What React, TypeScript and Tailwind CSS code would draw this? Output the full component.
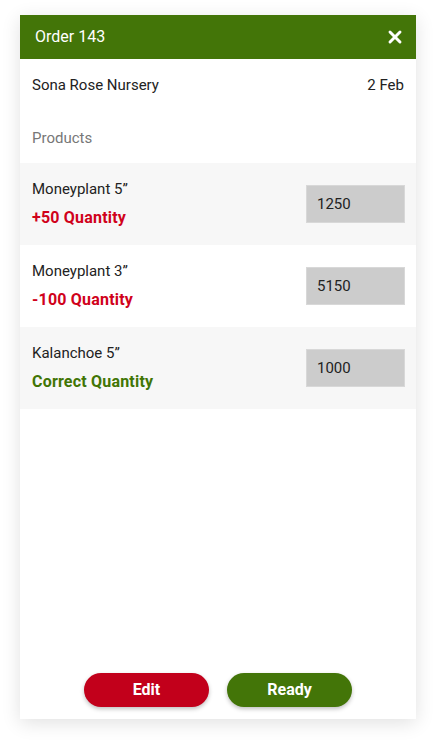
import { X } from "lucide-react";

const items = [
  { name: "Moneyplant 5”", note: "+50 Quantity", tone: "text-[#d0021b]", qty: "1250", bg: "bg-[#f7f7f7]" },
  { name: "Moneyplant 3”", note: "-100 Quantity", tone: "text-[#d0021b]", qty: "5150", bg: "bg-white" },
  { name: "Kalanchoe 5”", note: "Correct Quantity", tone: "text-[#417505]", qty: "1000", bg: "bg-[#f7f7f7]" },
];

export default function App() {
  return (
    <div className="min-h-screen bg-white pt-[15px] px-5 font-['Roboto',sans-serif]">
      <div className="w-[396px] h-[704px] bg-white shadow-[0_4px_18px_rgba(0,0,0,0.12)] flex flex-col">
        {/* Header */}
        <div className="h-11 bg-[#437508] flex items-center justify-between pl-[15px] pr-[11px]">
          <span className="text-white text-[16px]">Order 143</span>
          <X className="w-5 h-5 text-white" strokeWidth={3.5} />
        </div>

        <div className="flex items-center justify-between px-3 pt-[15px] text-[15px] text-[#222]">
          <span>Sona Rose Nursery</span>
          <span>2 Feb</span>
        </div>

        <div className="px-3 pt-[30px] pb-[14px] text-[15px] text-[#777]">Products</div>

        <div className="flex flex-col">
          {items.map((it) => (
            <div key={it.name} className={`${it.bg} h-[82px] flex items-center justify-between pl-3 pr-[11px]`}>
              <div className="flex flex-col gap-[6px]">
                <span className="text-[15px] text-[#222]">{it.name}</span>
                <span className={`text-[16px] font-bold tracking-[0.2px] ${it.tone}`}>{it.note}</span>
              </div>
              <div className="w-[99px] h-[38px] bg-[#cccccc] border border-[#d8d8d8] flex items-center pl-[10px] text-[15px] text-[#222]">
                {it.qty}
              </div>
            </div>
          ))}
        </div>

        <div className="flex-1" />

        <div className="flex justify-center gap-[18px] pb-3">
          <button className="w-[125px] h-[34px] rounded-full bg-[#c2001b] text-white font-bold text-[16px] shadow-[0_2px_4px_rgba(0,0,0,0.25)]">
            Edit
          </button>
          <button className="w-[125px] h-[34px] rounded-full bg-[#437508] text-white font-bold text-[16px] shadow-[0_2px_4px_rgba(0,0,0,0.25)]">
            Ready
          </button>
        </div>
      </div>
    </div>
  );
}
